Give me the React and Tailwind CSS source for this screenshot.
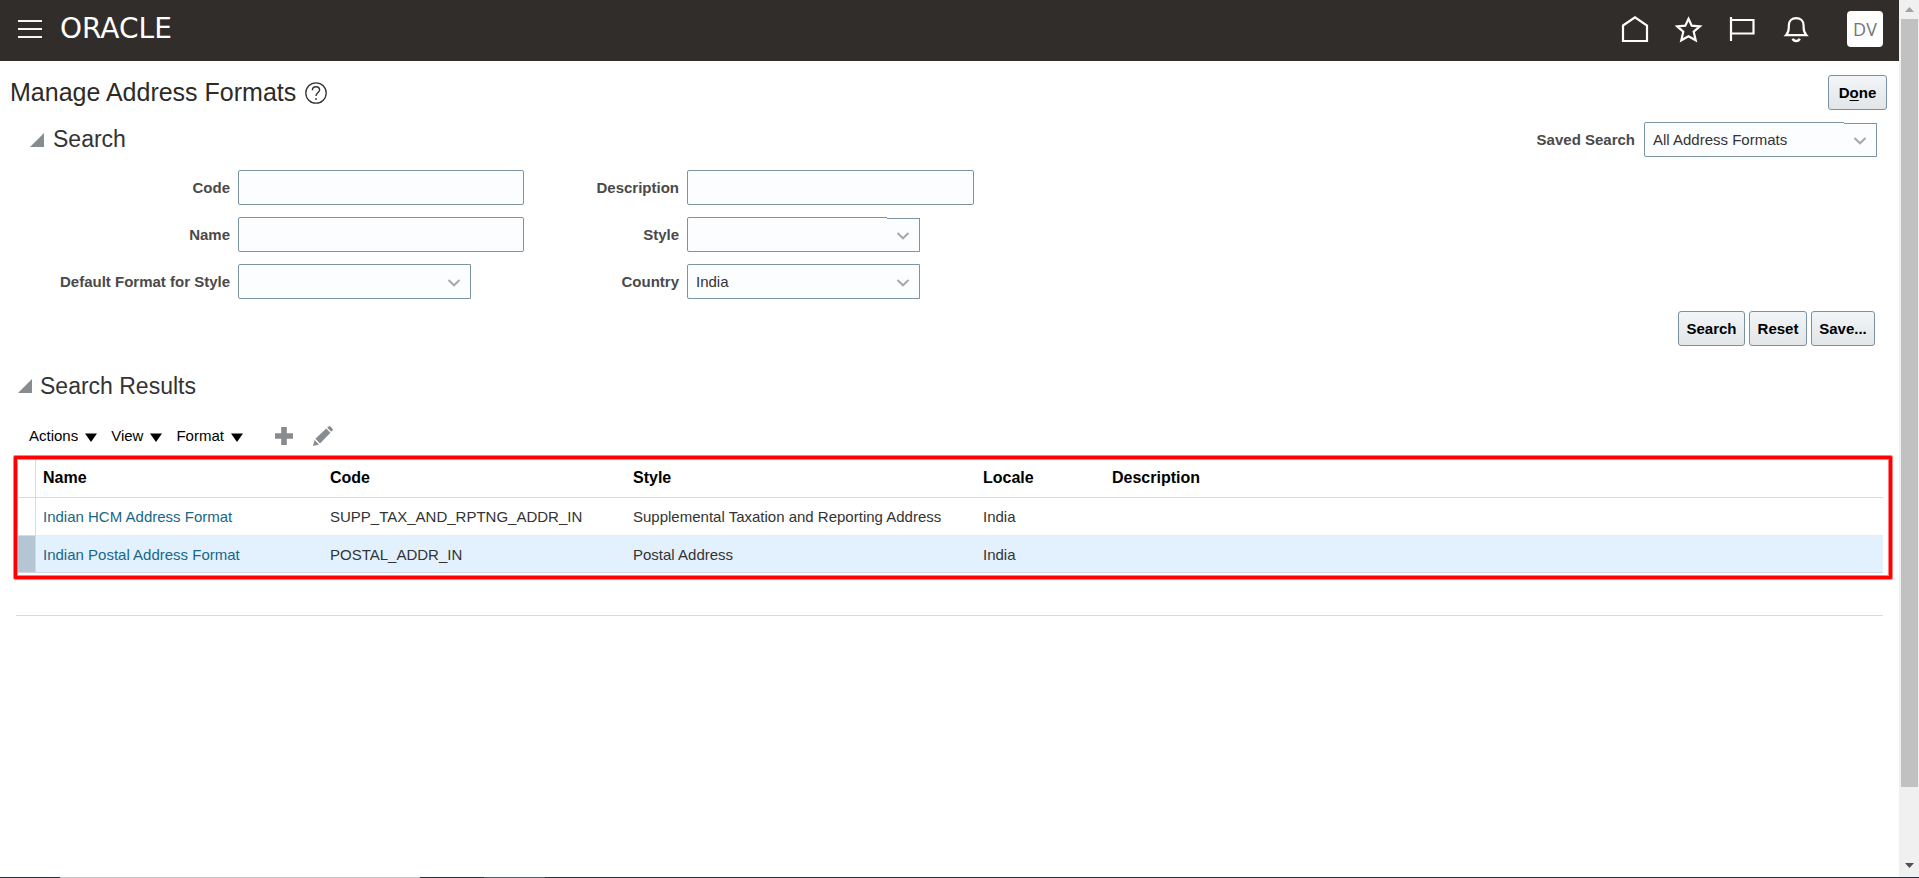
import React from "react";

const fieldBox =
  "h-[35px] border border-[#7d95a3] bg-[#fcfdff] px-[8px] pt-[2px] text-[15px] text-[#333333] outline-none";
const buttonBox =
  "h-[35px] rounded-[3px] border border-[#7991a5] bg-linear-to-b from-[#f3f5f7] to-[#e2e6e9] pt-[1px] text-center text-[15px] font-bold text-black";
const labelText = "pt-[2px] text-right text-[15px] font-bold text-[#4a4a4a]";

function TextField({ id, label }) {
  return (
    <>
      <label htmlFor={id} className={labelText}>{label}</label>
      <input id={id} type="text" className={`${fieldBox} w-full rounded-[2px]`} />
    </>
  );
}

function Dropdown({ id, value, stepped }) {
  return (
    <div className="relative w-[233px]">
      <select id={id} defaultValue={value} className={`${fieldBox} block w-full appearance-none rounded-l-[2px]`}>
        <option value={value}>{value}</option>
      </select>
      {stepped && (
        <span className="pointer-events-none absolute top-0 right-0 h-[2px] w-[33px] border-b border-[#7d95a3] bg-white" />
      )}
      <svg
        viewBox="0 0 14 8"
        className="pointer-events-none absolute top-[15px] right-[10px] h-[8px] w-[14px]"
        fill="none"
        stroke="#a6a8aa"
        strokeWidth="2"
        aria-hidden="true"
      >
        <path d="M1.5 1 7 6.3 12.5 1" />
      </svg>
    </div>
  );
}

function SelectField({ id, label, value = "", stepped }) {
  return (
    <>
      <label htmlFor={id} className={labelText}>{label}</label>
      <Dropdown id={id} value={value} stepped={stepped} />
    </>
  );
}

function Disclosure({ label }) {
  return (
    <button type="button" aria-label={label} aria-expanded="true" className="h-[14px] w-[14px]">
      <svg viewBox="0 0 14 14" className="block h-[14px] w-[14px]" aria-hidden="true">
        <path d="M14 0V14H0Z" fill="#878c90" />
      </svg>
    </button>
  );
}

function MenuButton({ label }) {
  return (
    <button type="button" className="flex items-center gap-[7px] text-[15px] text-black">
      {label}
      <svg viewBox="0 0 12 9" className="mt-[3px] h-[9px] w-[12px]" aria-hidden="true">
        <path d="M0 .5H12L6 9Z" fill="#000" />
      </svg>
    </button>
  );
}

function Header() {
  return (
    <header className="flex h-[61px] items-center bg-[#312d2a] pr-[16px] pb-[3px] pl-[18px]">
      <button type="button" aria-label="Navigator" className="mr-[18px] flex h-[18px] w-[24px] flex-col justify-between">
        <span className="h-[2px] w-full bg-[#f4f4f4]" />
        <span className="h-[2px] w-full bg-[#f4f4f4]" />
        <span className="h-[2px] w-full bg-[#f4f4f4]" />
      </button>
      <a href="#home" className="font-['DejaVu_Sans',sans-serif] text-[28px] leading-none text-white">ORACLE</a>
      <nav className="ml-auto flex items-center gap-[26px]">
        <a href="#home" aria-label="Home">
          <svg viewBox="0 0 28 28" className="h-[28px] w-[28px]" fill="none" stroke="#fff" strokeWidth="2.2">
            <path d="M2 10.5 14 2.4 26 10.5V26H2Z" />
          </svg>
        </a>
        <a href="#favorites" aria-label="Favorites">
          <svg viewBox="0 0 28 28" className="h-[28px] w-[28px]" fill="none" stroke="#fff" strokeWidth="2.2">
            <path d="M13.5 3.8 16.7 10.6 24.9 11.3 18.7 16.7 20.7 25.3 13.5 21.3 6.3 25.3 8.3 16.7 2.1 11.3 10.3 10.6Z" />
          </svg>
        </a>
        <a href="#watchlist" aria-label="Watchlist">
          <svg viewBox="0 0 28 28" className="h-[28px] w-[28px]" fill="none" stroke="#fff" strokeWidth="2.2">
            <path d="M2 2V26M2 5H24.5V18.5H2" />
          </svg>
        </a>
        <a href="#notifications" aria-label="Notifications">
          <svg viewBox="0 0 28 28" className="h-[28px] w-[28px]" fill="none" stroke="#fff" strokeWidth="2.2">
            <path d="M3 20.2C5 18 5.8 16.2 5.8 12.5V10.5C5.8 6 9 3.2 13.2 3.2S20.6 6 20.6 10.5V12.5C20.6 16.2 21.4 18 23.4 20.2Z" />
            <path d="M9.8 23.6C10.4 25.2 11.6 26 13.2 26S16 25.2 16.6 23.6" strokeWidth="2.6" />
          </svg>
        </a>
        <button
          type="button"
          className="ml-[10px] h-[36px] w-[36px] rounded-[4px] bg-white font-['Open_Sans',sans-serif] text-[18px] leading-[36px] text-[#757575]"
        >
          DV
        </button>
      </nav>
    </header>
  );
}

const rows = [
  { name: "Indian HCM Address Format", code: "SUPP_TAX_AND_RPTNG_ADDR_IN", style: "Supplemental Taxation and Reporting Address", locale: "India", selected: false },
  { name: "Indian Postal Address Format", code: "POSTAL_ADDR_IN", style: "Postal Address", locale: "India", selected: true },
];

function Results() {
  return (
    <div className="relative mt-[8px] mr-[16px] ml-[18px]">
      <table className="w-full table-fixed border-separate border-spacing-0 text-left text-[15px] text-[#333333]">
        <colgroup>
          <col className="w-[18px]" />
          <col className="w-[287px]" />
          <col className="w-[303px]" />
          <col className="w-[350px]" />
          <col className="w-[129px]" />
          <col />
        </colgroup>
        <thead>
          <tr className="h-[39px] text-[16px] text-black">
            <td className="border-r border-b border-[#d3dde6]" />
            {["Name", "Code", "Style", "Locale", "Description"].map((h) => (
              <th key={h} scope="col" className="border-b border-[#d3dde6] px-[7px] font-bold">{h}</th>
            ))}
          </tr>
        </thead>
        <tbody>
          {rows.map((r) => {
            const line = r.selected ? "border-b border-[#cddae5] bg-[#e3f1ff]" : "border-b border-[#e9edf0]";
            return (
              <tr key={r.name} className={r.selected ? "h-[37px]" : "h-[38px]"}>
                <td className={r.selected ? "border-r border-b border-[#cddae5] bg-[#b4c6d4]" : "border-r border-b border-[#d3dde6]"} />
                <td className={`${line} px-[7px] pt-[2px]`}>
                  <a href="#format" className="text-[#176788]">{r.name}</a>
                </td>
                <td className={`${line} px-[7px] pt-[2px]`}>{r.code}</td>
                <td className={`${line} px-[7px] pt-[2px]`}>{r.style}</td>
                <td className={`${line} px-[7px] pt-[2px]`}>{r.locale}</td>
                <td className={`${line} px-[7px] pt-[2px]`} />
              </tr>
            );
          })}
        </tbody>
      </table>
      <div className="pointer-events-none absolute -top-[3px] -right-[9px] -bottom-[6px] -left-[4px] rounded-[1px] border-[3px] border-[#ff0000] shadow-[0_0_0_1px_#ff000080,inset_0_0_0_1px_#ff000080]" />
    </div>
  );
}

function ScrollRail() {
  return (
    <div className="flex w-[20px] flex-col items-center bg-[#f0f0f0]" aria-hidden="true">
      <div className="flex h-[19px] shrink-0 items-center">
        <svg viewBox="0 0 9 5" className="h-[5px] w-[9px]"><path d="M0 5H9L4.5 0Z" fill="#a3a3a3" /></svg>
      </div>
      <div className="w-full flex-1 pr-[1px] pl-[2px]">
        <div className="h-[92%] w-full bg-[#c1c1c1]" />
      </div>
      <div className="flex h-[23px] shrink-0 items-center">
        <svg viewBox="0 0 9 5" className="h-[5px] w-[9px]"><path d="M0 0H9L4.5 5Z" fill="#505050" /></svg>
      </div>
    </div>
  );
}

export default function App() {
  return (
    <div className="flex h-screen flex-col bg-white font-['Liberation_Sans',Arial,sans-serif]">
      <div className="flex min-h-0 flex-1">
        <div className="min-w-0 flex-1 overflow-hidden">
          <Header />
          <main>
            <div className="flex items-center justify-between pt-[14px] pr-[12px] pl-[10px]">
              <div className="flex items-center gap-[9px]">
                <h1 className="text-[25px] leading-[35px] text-[#2d2a28]">Manage Address Formats</h1>
                <button type="button" aria-label="Help">
                  <svg viewBox="0 0 22 22" className="block h-[22px] w-[22px]" fill="none" stroke="#333" aria-hidden="true">
                    <circle cx="11" cy="11" r="10.2" strokeWidth="1.3" />
                    <path d="M7.4 8.3C7.4 6.2 8.9 4.8 11 4.8S14.6 6.1 14.6 8C14.6 10.4 11 10.8 11 14" strokeWidth="1.4" />
                    <circle cx="11" cy="17" r="0.9" fill="#333" stroke="none" />
                  </svg>
                </button>
              </div>
              <button type="button" className={`${buttonBox} w-[59px]`}>
                D<span className="underline decoration-1 underline-offset-2">o</span>ne
              </button>
            </div>

            <section>
              <div className="mt-[12px] flex items-center justify-between pr-[22px] pl-[30px]">
                <div className="flex items-center gap-[9px]">
                  <Disclosure label="Collapse Search" />
                  <h2 className="text-[23px] leading-[35px] text-[#333333]">Search</h2>
                </div>
                <div className="flex items-center gap-[9px]">
                  <label htmlFor="saved" className={labelText}>Saved Search</label>
                  <Dropdown id="saved" value="All Address Formats" stepped />
                </div>
              </div>
              <div className="mt-[13px] grid grid-cols-[230px_286px_147px_287px] items-center gap-x-[8px] gap-y-[12px]">
                <TextField id="code" label="Code" />
                <TextField id="description" label="Description" />
                <TextField id="name" label="Name" />
                <SelectField id="style" label="Style" stepped />
                <SelectField id="default" label="Default Format for Style" />
                <SelectField id="country" label="Country" value="India" />
              </div>
              <div className="mt-[12px] flex justify-end gap-[4px] pr-[24px]">
                <button type="button" className={`${buttonBox} w-[67px]`}>Search</button>
                <button type="button" className={`${buttonBox} w-[58px]`}>Reset</button>
                <button type="button" className={`${buttonBox} w-[64px]`}>Save...</button>
              </div>
            </section>

            <section>
              <div className="mt-[25px] flex items-center gap-[8px] pl-[18px]">
                <Disclosure label="Collapse Search Results" />
                <h2 className="text-[23px] leading-[30px] text-[#333333]">Search Results</h2>
              </div>
              <div className="mt-[20px] flex h-[30px] items-center pl-[29px]">
                <div className="flex gap-[14px]">
                  <MenuButton label="Actions" />
                  <MenuButton label="View" />
                  <MenuButton label="Format" />
                </div>
                <button type="button" aria-label="Create" className="ml-[32px]">
                  <svg viewBox="0 0 18 18" className="block h-[18px] w-[18px]" aria-hidden="true">
                    <path d="M6.2 0H11.8V6.2H18V11.8H11.8V18H6.2V11.8H0V6.2H6.2Z" fill="#878c90" />
                  </svg>
                </button>
                <button type="button" aria-label="Edit" className="ml-[20px]">
                  <svg viewBox="0 0 20 20" className="block h-[20px] w-[20px]" fill="#878c90" aria-hidden="true">
                    <path d="M0 20 1.6 14 6 18.4Z" />
                    <path d="M2.4 12.8 13.2 2.6 17.4 6.8 7 17.4Z" />
                    <path d="M14.2 1.7 15.7.4Q16.5-.2 17.3.5L19.5 2.7Q20.2 3.5 19.6 4.3L18.3 5.8Z" />
                  </svg>
                </button>
              </div>
              <Results />
              <hr className="mt-[42px] mr-[16px] ml-[16px] border-t border-[#d3dde6]" />
            </section>
          </main>
        </div>
        <ScrollRail />
      </div>
      <div className="flex h-px shrink-0 bg-[#2a3139]">
        <span className="ml-[60px] w-[360px] bg-[#c3c3c3]" />
        <span className="ml-[64px] w-[61px] bg-[#565d65]" />
      </div>
    </div>
  );
}
